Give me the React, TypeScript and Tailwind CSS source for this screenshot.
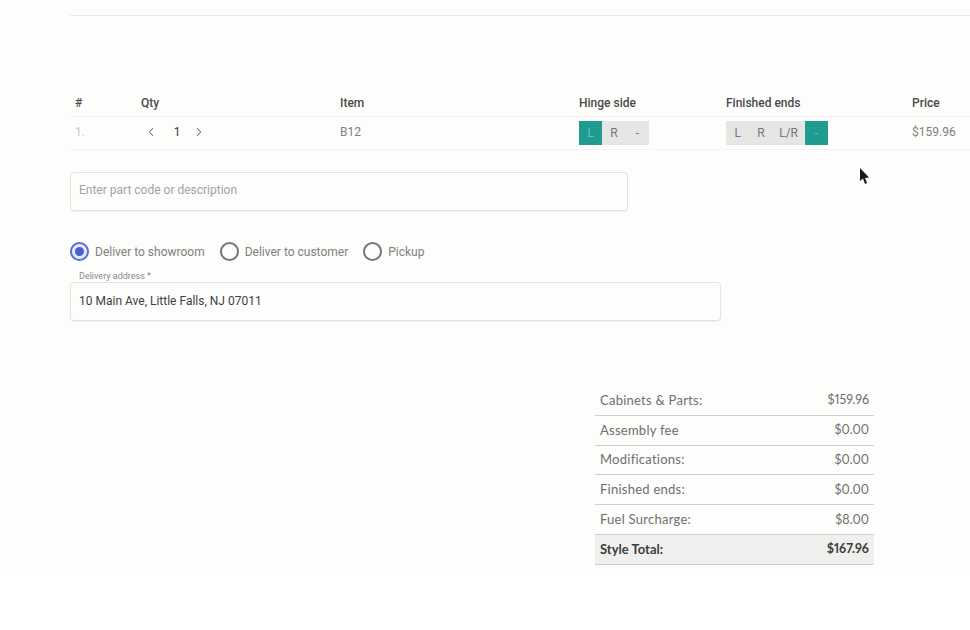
import { ChevronLeft, ChevronRight } from "lucide-react";

const summary = [
  { label: "Cabinets & Parts:", value: "$159.96" },
  { label: "Assembly fee", value: "$0.00" },
  { label: "Modifications:", value: "$0.00" },
  { label: "Finished ends:", value: "$0.00" },
  { label: "Fuel Surcharge:", value: "$8.00" },
];

const Toggle = ({ items, active }: { items: string[]; active: string }) => (
  <div className="flex h-6 bg-[#e6e6e5] text-[12px] text-[#777777]">
    {items.map((item) => (
      <div
        key={item}
        className={
          item === active
            ? "flex h-6 w-[23.4px] items-center justify-center bg-[#1f9c8f] text-[#66c4b9]"
            : item === "L/R"
              ? "flex h-6 w-[32px] items-center justify-center"
              : "flex h-6 w-[23.3px] items-center justify-center"
        }
      >
        {item}
      </div>
    ))}
  </div>
);

const Radio = ({ label, checked }: { label: string; checked?: boolean }) => (
  <label className="flex items-center gap-[6px]">
    {checked ? (
      <span className="flex h-[19px] w-[19px] items-center justify-center rounded-full border-2 border-[#5b6fd6] bg-[#e8ebfa]">
        <span className="h-[9px] w-[9px] rounded-full bg-[#4a5fd3]" />
      </span>
    ) : (
      <span className="h-[19px] w-[19px] rounded-full border-2 border-[#777777]" />
    )}
    <span className="text-[12px] text-[#808080]">{label}</span>
  </label>
);

const App = () => {
  return (
    <div className="relative h-[630px] w-[970px] overflow-hidden bg-white font-['Roboto',sans-serif]">
      <div className="h-[576px] bg-[#fdfdfc] pl-[70px]">
        <div className="h-[16px] border-b border-[#e9e9e8]" />

        <div className="mt-[79px] grid grid-cols-[66px_199px_239px_147px_186px_1fr] border-b border-[#f1f1f0] pl-[5px] pt-px text-[12px] font-medium text-[#4a4a4a]">
          <div className="h-[20px] leading-[14px]">#</div>
          <div className="leading-[14px]">Qty</div>
          <div className="leading-[14px]">Item</div>
          <div className="leading-[14px]">Hinge side</div>
          <div className="leading-[14px]">Finished ends</div>
          <div className="leading-[14px]">Price</div>
        </div>

        <div className="grid h-[33px] grid-cols-[66px_199px_239px_147px_186px_1fr] items-center border-b border-[#f3f3f2] pl-[5px] text-[12px] text-[#808080]">
          <div className="pb-[3px] text-[#b9cfcc]">1.</div>
          <div className="flex items-center pb-[3px] pl-[3px] text-[#333333]">
            <ChevronLeft size={14} strokeWidth={1.75} className="text-[#666666]" />
            <span className="ml-[14px] mr-[10px] w-[10px] text-center">1</span>
            <ChevronRight size={14} strokeWidth={1.75} className="text-[#666666]" />
          </div>
          <div className="pb-[3px]">B12</div>
          <div className="flex">
            <Toggle items={["L", "R", "-"]} active="L" />
          </div>
          <div className="flex">
            <Toggle items={["L", "R", "L/R", "-"]} active="-" />
          </div>
          <div className="pb-[3px]">$159.96</div>
        </div>

        <div className="mt-[22px] flex h-[39px] w-[558px] items-center rounded border border-[#e3e3e2] pb-[3px] pl-2 text-[12px] text-[#a3a3a3] shadow-[0_1px_1px_rgba(0,0,0,0.06)]">
          Enter part code or description
        </div>

        <div className="mt-[31px] flex gap-[15px]">
          <Radio label="Deliver to showroom" checked />
          <Radio label="Deliver to customer" />
          <Radio label="Pickup" />
        </div>

        <div className="relative mt-[21px] flex h-[39px] w-[651px] items-center rounded border border-[#e3e3e2] pb-[2px] pl-2 text-[12px] text-[#3f3f3f] shadow-[0_1px_1px_rgba(0,0,0,0.06)]">
          <span className="absolute -top-[13px] left-2 text-[9px] text-[#8a8a8a]">Delivery address *</span>
          10 Main Ave, Little Falls, NJ 07011
        </div>

        <div className="mt-[65px] ml-[525px] w-[279px] font-['Lato',sans-serif] text-[13px] text-[#6e6e6e]">
          {summary.map((row) => (
            <div
              key={row.label}
              className="flex h-[29.8px] items-center justify-between border-b border-[#cfcfce] px-[5px] pb-px leading-[20px]"
            >
              <span className="tracking-[0.25px]">{row.label}</span>
              <span className="pt-px text-[12.5px] lining-nums proportional-nums">{row.value}</span>
            </div>
          ))}
          <div className="flex h-[29.8px] items-center justify-between border-b border-[#cfcfce] bg-[#efefee] px-[5px] font-bold leading-[20px] text-[#3d3d3d]">
            <span>Style Total:</span>
            <span className="text-[12.5px] lining-nums proportional-nums">$167.96</span>
          </div>
        </div>
      </div>

      <svg className="absolute left-[859px] top-[168px]" width="11" height="18" viewBox="0 0 11 18">
        <path d="M1 0 L1 13 L4 10.5 L6 16 L8 15 L6 10 L10 9.5 Z" fill="#1a1a1a" />
      </svg>
    </div>
  );
};

export default App;
